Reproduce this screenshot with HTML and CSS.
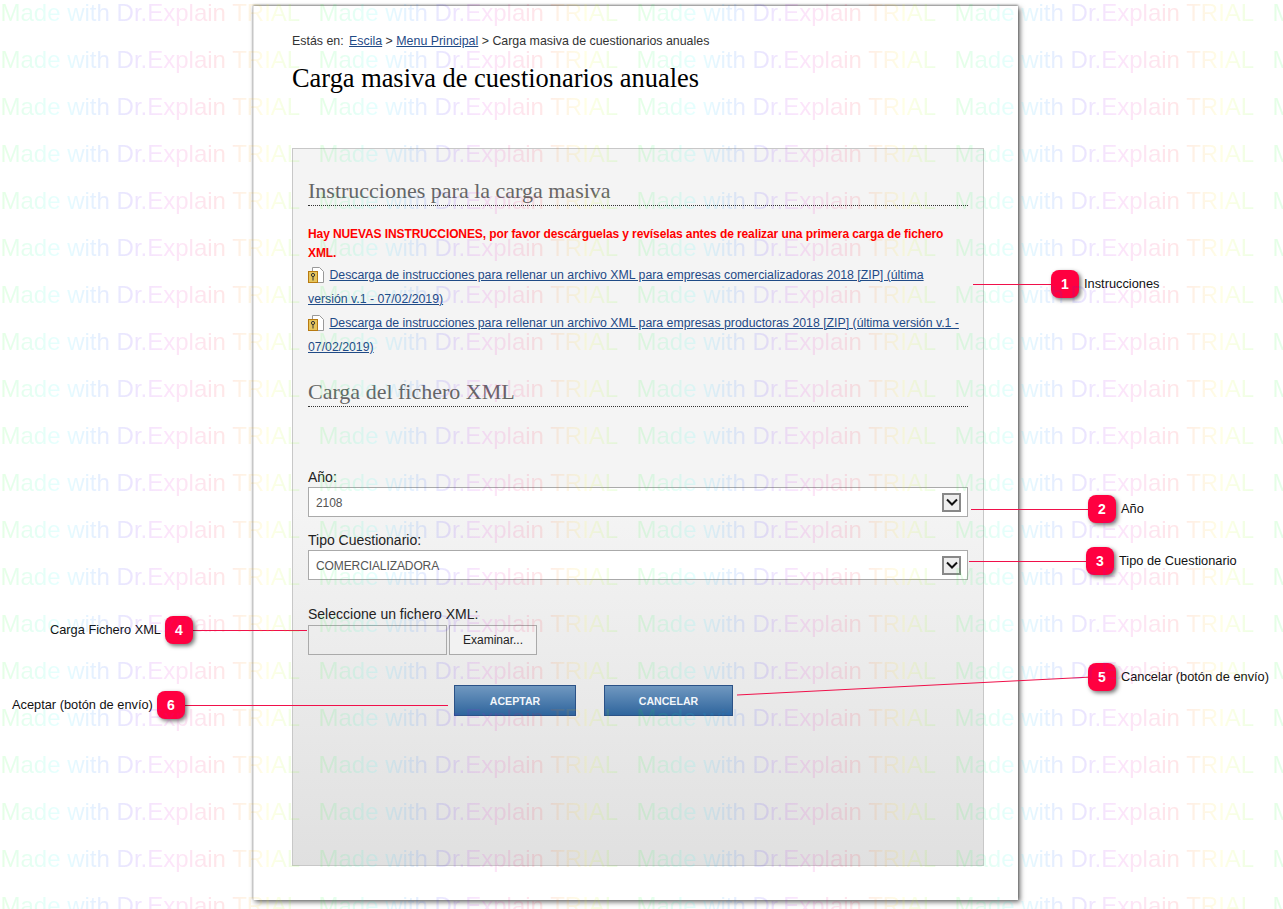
FILE: index.html
```html
<!DOCTYPE html>
<html lang="es">

<head>
    <meta charset="UTF-8">
    <meta name="viewport" content="width=device-width, initial-scale=1.0">
    <title>Carga masiva de cuestionarios anuales</title>
    <link rel="stylesheet" href="styles.css">
</head>

<body>
    <div class="page">
        <p class="breadcrumb">
            <span class="breadcrumb-label">Estás en:</span>
            <a href="#">Escila</a> &gt; <a href="#">Menu Principal</a> &gt; Carga masiva de cuestionarios anuales
        </p>
        <h1>Carga masiva de cuestionarios anuales</h1>

        <div class="panel">
            <h2>Instrucciones para la carga masiva</h2>
            <p class="warning">Hay NUEVAS INSTRUCCIONES, por favor descárguelas y revíselas antes de realizar una primera carga de fichero XML.</p>
            <p class="download">
                <svg class="zip-icon" viewBox="0 0 16 16"><path d="M4.5.5h7l4 4v11h-11z" fill="#fff" stroke="#999"/><rect x=".5" y="4.5" width="9" height="11" fill="#e6c55c" stroke="#b87a10"/><circle cx="5" cy="8" r="1.6" fill="none" stroke="#333"/><path d="M5 9.5v4" stroke="#333"/></svg>
                <a href="#">Descarga de instrucciones para rellenar un archivo XML para empresas comercializadoras 2018 [ZIP] (última versión v.1 - 07/02/2019)</a>
            </p>
            <p class="download">
                <svg class="zip-icon" viewBox="0 0 16 16"><path d="M4.5.5h7l4 4v11h-11z" fill="#fff" stroke="#999"/><rect x=".5" y="4.5" width="9" height="11" fill="#e6c55c" stroke="#b87a10"/><circle cx="5" cy="8" r="1.6" fill="none" stroke="#333"/><path d="M5 9.5v4" stroke="#333"/></svg>
                <a href="#">Descarga de instrucciones para rellenar un archivo XML para empresas productoras 2018 [ZIP] (última versión v.1 - 07/02/2019)</a>
            </p>

            <h2 class="second-title">Carga del fichero XML</h2>

            <form class="upload-form">
                <label class="field-label first-label">Año:</label>
                <div class="select-box">
                    <span class="select-value">2108</span>
                    <span class="select-arrow"><svg viewBox="0 0 12 8" width="12" height="8"><path d="M1 1.5l5 5 5-5" fill="none" stroke="#111" stroke-width="2"/></svg></span>
                </div>
                <label class="field-label">Tipo Cuestionario:</label>
                <div class="select-box">
                    <span class="select-value">COMERCIALIZADORA</span>
                    <span class="select-arrow"><svg viewBox="0 0 12 8" width="12" height="8"><path d="M1 1.5l5 5 5-5" fill="none" stroke="#111" stroke-width="2"/></svg></span>
                </div>
                <label class="field-label file-label">Seleccione un fichero XML:</label>
                <div class="file-row">
                    <div class="file-name"></div>
                    <button type="button" class="file-button">Examinar...</button>
                </div>
                <div class="actions">
                    <button type="button" class="action-button accept">ACEPTAR</button>
                    <button type="button" class="action-button cancel">CANCELAR</button>
                </div>
            </form>
        </div>
    </div>

    <!-- lineas de las anotaciones -->
    <svg class="callout-lines" width="1283" height="909">
        <path d="M973 284.5H1055" />
        <path d="M971 509.5H1092" />
        <path d="M969 561.5H1090" />
        <path d="M193 630.5H307" />
        <path d="M737 695L1092 677" />
        <path d="M185 705.5H448" />
    </svg>
    <div class="badge badge-1">1</div><div class="note note-1">Instrucciones</div>
    <div class="badge badge-2">2</div><div class="note note-2">Año</div>
    <div class="badge badge-3">3</div><div class="note note-3">Tipo de Cuestionario</div>
    <div class="badge badge-4">4</div><div class="note note-4">Carga Fichero XML</div>
    <div class="badge badge-5">5</div><div class="note note-5">Cancelar (botón de envío)</div>
    <div class="badge badge-6">6</div><div class="note note-6">Aceptar (botón de envío)</div>

    <!-- marca de agua repetida sobre toda la pagina -->
    <svg class="watermark" width="1283" height="909" aria-hidden="true">
        <defs>
            <linearGradient id="rainbow" gradientUnits="userSpaceOnUse" x1="0" y1="0" x2="298" y2="0">
                <stop offset="0" stop-color="#00ff00" stop-opacity="0.1" />
                <stop offset="0.2" stop-color="#00ffff" stop-opacity="0.1" />
                <stop offset="0.33" stop-color="#0060ff" stop-opacity="0.1" />
                <stop offset="0.44" stop-color="#4000ff" stop-opacity="0.1" />
                <stop offset="0.55" stop-color="#e000e0" stop-opacity="0.1" />
                <stop offset="0.74" stop-color="#ff0020" stop-opacity="0.1" />
                <stop offset="0.8" stop-color="#ff7000" stop-opacity="0.1" />
                <stop offset="0.9" stop-color="#ffff00" stop-opacity="0.1" />
                <stop offset="1" stop-color="#60ff00" stop-opacity="0.1" />
            </linearGradient>
            <pattern id="wm" patternUnits="userSpaceOnUse" x="0" y="0" width="318" height="47">
                <text x="0.5" y="21" class="watermark-text" fill="url(#rainbow)">Made with Dr.Explain TRIAL</text>
            </pattern>
        </defs>
        <rect width="1283" height="909" fill="url(#wm)" />
    </svg>
</body>
</html>
```

FILE: styles.css
```css
html, body {
    margin: 0;
    padding: 0;
}

body {
    position: relative;
    width: 1283px;
    height: 909px;
    overflow: hidden;
    background-color: #fff;
    font-family: "Liberation Sans", Arial, sans-serif;
    font-size: 12.4px;
    color: #333;
}

a {
    color: #1f4a86;
}

.page {
    box-sizing: border-box;
    width: 765px;
    height: 894px;
    margin: 6px 0 0 253px;
    padding: 27px 33px 0 38px;
    background-color: #fff;
    border-left: 1px solid #e2e2e2;
    box-shadow: 2px 2px 5px rgba(0, 0, 0, 0.6), 0 -1px 2px rgba(0, 0, 0, 0.4);
}

.breadcrumb {
    margin: 0;
    line-height: 16px;
}

.breadcrumb-label {
    margin-right: 2px;
}

h1 {
    margin: 14px 0 0;
    font-family: "Liberation Serif", Georgia, serif;
    font-size: 26.4px;
    font-weight: normal;
    line-height: 30px;
    color: #000;
}

.panel {
    box-sizing: border-box;
    width: 692px;
    height: 718px;
    margin-top: 55px;
    padding: 29px 15px 0;
    border: 1px solid #c8c8c8;
    background: linear-gradient(to bottom, #f4f4f4 0%, #f4f4f4 50%, #e0e0e0 100%);
}

h2 {
    margin: 0;
    padding-bottom: 2px;
    font-family: "Liberation Serif", Georgia, serif;
    font-size: 22px;
    font-weight: normal;
    line-height: 25px;
    color: #666;
    border-bottom: 1px dotted #333;
}

.warning {
    margin: 19px 0 0;
    font-size: 12px;
    letter-spacing: -0.1px;
    font-weight: bold;
    line-height: 19px;
    color: #f00;
}

.download {
    margin: 0;
    padding-right: 5px;
    font-size: 12.3px;
    line-height: 24px;
}

.zip-icon {
    width: 16px;
    height: 16px;
    margin-right: 2px;
    vertical-align: -4px;
}

.second-title {
    margin-top: 20px;
}

.field-label {
    display: block;
    font-size: 14px;
    line-height: 16px;
    color: #222;
}

.first-label {
    margin-top: 62px;
}

.select-box {
    box-sizing: border-box;
    display: flex;
    justify-content: space-between;
    align-items: center;
    height: 30px;
    margin-top: 2px;
    margin-bottom: 15px;
    padding: 0 6px 0 7px;
    border: 1px solid #aaa;
    background-color: #fff;
    font-size: 12px;
    letter-spacing: -0.1px;
    color: #555;
}

.select-value {
    margin-top: 2px;
}

.select-arrow {
    box-sizing: border-box;
    display: flex;
    justify-content: center;
    align-items: center;
    width: 19px;
    height: 19px;
    border: 2px solid #888;
    background-color: #eee;
}

.file-label {
    margin-top: 26px;
}

.file-row {
    display: flex;
    gap: 2px;
    margin-top: 3px;
}

.file-name {
    box-sizing: border-box;
    width: 139px;
    height: 30px;
    border: 1px solid #aaa;
}

.file-button {
    box-sizing: border-box;
    width: 88px;
    height: 30px;
    padding: 0;
    border: 1px solid #aaa;
    background-color: #f2f2f2;
    font-family: inherit;
    font-size: 12px;
    color: #222;
}

.actions {
    display: flex;
    gap: 28px;
    margin-top: 30px;
    margin-left: 146px;
}

.action-button {
    box-sizing: border-box;
    height: 31px;
    padding: 0;
    border: 1px solid #2b5287;
    background: linear-gradient(to bottom, #7098c0, #2f659d);
    font-family: inherit;
    font-size: 10.6px;
    font-weight: bold;
    color: #f2f6fa;
}

.accept {
    width: 122px;
}

.cancel {
    width: 129px;
}

.callout-lines {
    position: absolute;
    left: 0;
    top: 0;
}

.callout-lines path {
    fill: none;
    stroke: #f0104a;
    stroke-width: 1;
}

.badge {
    position: absolute;
    width: 28px;
    height: 28px;
    border-radius: 8px;
    background-color: #ff0040;
    box-shadow: 2px 2px 4px rgba(0, 0, 0, 0.55);
    font-weight: bold;
    font-size: 14px;
    line-height: 28px;
    text-align: center;
    color: #fff;
}

.note {
    position: absolute;
    font-size: 12.8px;
    line-height: 16px;
    color: #111;
    white-space: nowrap;
}

.badge-1 { left: 1051px; top: 270px; }
.note-1 { left: 1084px; top: 276px; }
.badge-2 { left: 1088px; top: 495px; }
.note-2 { left: 1121px; top: 501px; }
.badge-3 { left: 1086px; top: 547px; }
.note-3 { left: 1119px; top: 553px; }
.badge-4 { left: 165px; top: 616px; }
.note-4 { left: 50px; top: 622px; }
.badge-5 { left: 1088px; top: 663px; }
.note-5 { left: 1121px; top: 669px; }
.badge-6 { left: 157px; top: 691px; }
.note-6 { left: 12px; top: 697px; }

.watermark {
    position: absolute;
    left: 0;
    top: 0;
    pointer-events: none;
}

.watermark-text {
    font-family: "Liberation Sans", Arial, sans-serif;
    font-size: 24px;
}
```
